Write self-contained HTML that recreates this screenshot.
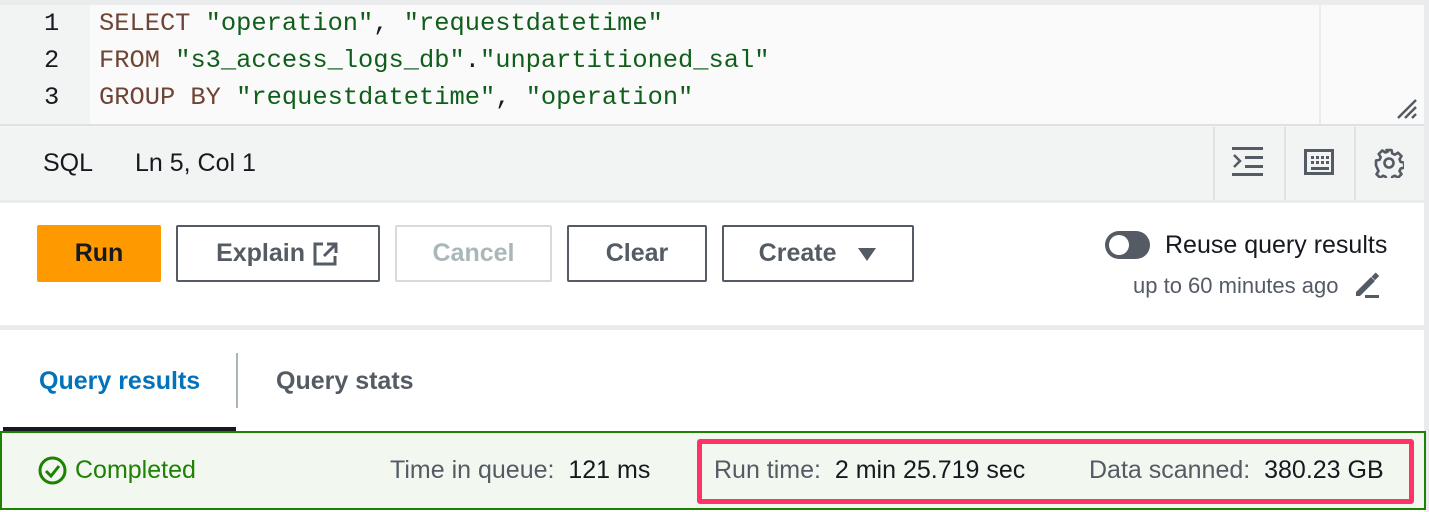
<!DOCTYPE html>
<html><head><meta charset="utf-8"><style>
*{margin:0;padding:0;box-sizing:border-box}
body{width:1429px;height:512px;overflow:hidden;background:#fff;font-family:"Liberation Sans",sans-serif;position:relative;color:#16191f}
.a{position:absolute}
.code{font-family:"Liberation Mono",monospace;font-size:25.4px;line-height:37px;white-space:pre}
.k{color:#6e4434}.s{color:#0f5e1a}.p{color:#16191f}
.btn{position:absolute;top:225px;height:57px;border:2px solid #545b64;border-radius:2px;font-weight:bold;font-size:25px;color:#545b64;display:flex;align-items:center;justify-content:center;background:#fff}
.ic{position:absolute;top:127px;width:70px;height:73px;border-left:2px solid #dfe1e3}
.t{font-size:25px}
</style></head><body>
<div class="a" style="left:0;top:0;width:1429px;height:5px;background:#e9ebed"></div>
<div class="a" style="left:0;top:5px;width:90px;height:120px;background:#f2f3f3"></div>
<div class="a" style="left:90px;top:5px;width:1335px;height:120px;background:#fafafa"></div>
<div class="a" style="left:1319px;top:5px;width:2px;height:120px;background:#e9ebed"></div>
<div class="a" style="left:1424px;top:0;width:5px;height:512px;background:#e9ebed"></div>
<svg class="a" style="left:1396px;top:98px" width="24" height="22"><g stroke="#545b64" stroke-width="2.5"><line x1="2" y1="20" x2="20" y2="2"/><line x1="9" y1="20" x2="20" y2="9"/><line x1="16" y1="20" x2="20" y2="16"/></g></svg>
<div class="a code" style="left:44px;top:5px;color:#16191f">1
2
3</div>
<div class="a code" style="left:99px;top:5px"><span class="k">SELECT</span> <span class="s">"operation"</span><span class="p">,</span> <span class="s">"requestdatetime"</span>
<span class="k">FROM</span> <span class="s">"s3_access_logs_db"</span><span class="p">.</span><span class="s">"unpartitioned_sal"</span>
<span class="k">GROUP BY</span> <span class="s">"requestdatetime"</span><span class="p">,</span> <span class="s">"operation"</span></div>
<div class="a" style="left:0;top:124px;width:1424px;height:2px;background:#dfe1e3"></div>
<div class="a" style="left:0;top:126px;width:1424px;height:74px;background:#f2f3f3"></div>
<div class="a t" style="left:43px;top:149px">SQL</div>
<div class="a t" style="left:135px;top:149px">Ln 5, Col 1</div>
<div class="ic" style="left:1213px"></div><div class="ic" style="left:1284px"></div><div class="ic" style="left:1354px"></div>
<svg class="a" style="left:1232px;top:147px" width="32" height="30"><g fill="#545b64"><rect x="0" y="0" width="31" height="3"/><rect x="13" y="9" width="18" height="3"/><rect x="13" y="18" width="18" height="3"/><rect x="0" y="26" width="31" height="3"/></g><polyline points="2,8 8,14 2,20" fill="none" stroke="#545b64" stroke-width="2.5"/></svg>
<svg class="a" style="left:1304px;top:149px" width="31" height="27"><rect x="1.5" y="1.5" width="27" height="23" fill="none" stroke="#545b64" stroke-width="3"/><g fill="#545b64"><rect x="7" y="7" width="3" height="3"/><rect x="12" y="7" width="3" height="3"/><rect x="17" y="7" width="3" height="3"/><rect x="22" y="7" width="3" height="3"/><rect x="7" y="12" width="3" height="3"/><rect x="12" y="12" width="3" height="3"/><rect x="17" y="12" width="3" height="3"/><rect x="22" y="12" width="3" height="3"/><rect x="7" y="18" width="18" height="3"/></g></svg>
<svg class="a" style="left:1374px;top:148px" width="30" height="30" viewBox="0 0 30 30"><path d="M12.5 2h5l.8 3.6 2.6 1.1 3.1-2 3.5 3.5-2 3.1 1.1 2.6 3.6.8v5l-3.6.8-1.1 2.6 2 3.1-3.5 3.5-3.1-2-2.6 1.1-.8 3.6h-5l-.8-3.6-2.6-1.1-3.1 2-3.5-3.5 2-3.1-1.1-2.6L2 17.5v-5l3.6-.8 1.1-2.6-2-3.1 3.5-3.5 3.1 2 2.6-1.1z" fill="none" stroke="#545b64" stroke-width="2.6" stroke-linejoin="round"/><circle cx="15" cy="15" r="4.5" fill="none" stroke="#545b64" stroke-width="2.6"/></svg>
<div class="a" style="left:0;top:200px;width:1424px;height:3px;background:#e9ebed"></div>
<div class="btn" style="left:37px;width:124px;background:#ff9900;border-color:#ff9900;color:#16191f">Run</div>
<div class="btn" style="left:176px;width:204px">Explain&nbsp;<svg width="28" height="26" viewBox="0 0 28 26"><path d="M11 3H3v20h20v-8" fill="none" stroke="#545b64" stroke-width="3"/><path d="M15 3h9v9M24 3 12 15" fill="none" stroke="#545b64" stroke-width="3"/></svg></div>
<div class="btn" style="left:395px;width:157px;border-color:#d5dbdb;color:#aab7b8">Cancel</div>
<div class="btn" style="left:567px;width:140px">Clear</div>
<div class="btn" style="left:722px;width:192px">Create&nbsp;&nbsp;&nbsp;<svg width="20" height="16"><polygon points="1,2 19,2 10,15" fill="#545b64"/></svg></div>
<div class="a" style="left:1105px;top:231px;width:45px;height:28px;border-radius:14px;background:#545b64"></div>
<div class="a" style="left:1109px;top:235px;width:20px;height:20px;border-radius:10px;background:#fff"></div>
<div class="a" style="left:1165px;top:231px;font-size:25px">Reuse query results</div>
<div class="a" style="left:1133px;top:273px;font-size:22px;color:#545b64">up to 60 minutes ago</div>
<svg class="a" style="left:1353px;top:271px" width="28" height="28"><path d="M3 21 18 6l4 4L7 25H3z" fill="#545b64"/><rect x="20" y="2" width="5" height="6" transform="rotate(45 22 5)" fill="#545b64"/><rect x="12" y="24" width="14" height="3" fill="#545b64"/></svg>
<div class="a" style="left:0;top:325px;width:1424px;height:5px;background:#e9ebed"></div>
<div class="a" style="left:39px;top:367px;font-size:25px;font-weight:bold;color:#0073bb">Query results</div>
<div class="a" style="left:236px;top:353px;width:2px;height:55px;background:#aab7b8"></div>
<div class="a" style="left:276px;top:367px;font-size:25px;font-weight:bold;color:#545b64">Query stats</div>
<div class="a" style="left:3px;top:427px;width:233px;height:4px;background:#16191f"></div>
<div class="a" style="left:0;top:431px;width:1426px;height:79px;background:#f2f8f0;border:2px solid #1d8102"></div>
<svg class="a" style="left:38px;top:456px" width="29" height="29"><circle cx="14.5" cy="14.5" r="12.5" fill="none" stroke="#1d8102" stroke-width="3"/><polyline points="8,15 13,20 21,10" fill="none" stroke="#1d8102" stroke-width="3"/></svg>
<div class="a t" style="left:75px;top:456px;color:#1d8102">Completed</div>
<div class="a t" style="left:390px;top:456px;color:#545b64">Time in queue:&nbsp; <span style="color:#16191f">121 ms</span></div>
<div class="a" style="left:697px;top:439px;width:717px;height:65px;border:5px solid #ff3366;border-radius:3px"></div>
<div class="a t" style="left:714px;top:456px;color:#545b64">Run time:&nbsp; <span style="color:#16191f">2 min 25.719 sec</span></div>
<div class="a t" style="left:1089px;top:456px;color:#545b64">Data scanned:&nbsp; <span style="color:#16191f">380.23 GB</span></div>
</body></html>
